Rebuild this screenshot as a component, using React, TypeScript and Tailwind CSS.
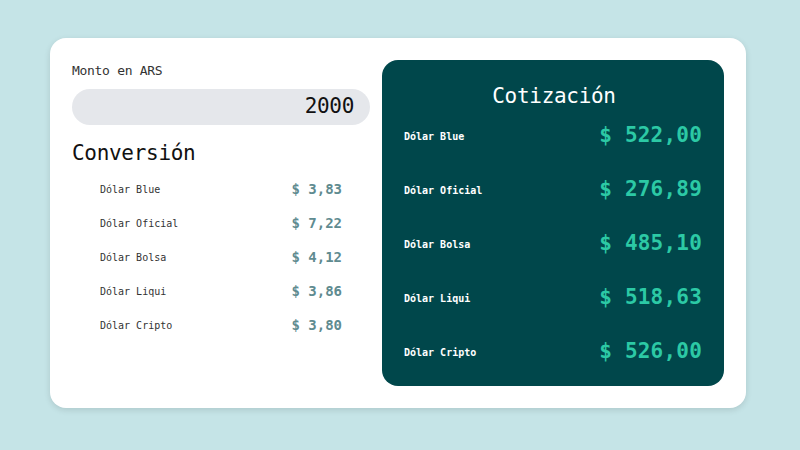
import React from 'react';

const mono = { fontFamily: '"DejaVu Sans Mono", "Liberation Mono", monospace' };

const conversion = [
  { name: 'Dólar Blue', value: '3,83' },
  { name: 'Dólar Oficial', value: '7,22' },
  { name: 'Dólar Bolsa', value: '4,12' },
  { name: 'Dólar Liqui', value: '3,86' },
  { name: 'Dólar Cripto', value: '3,80' },
];

const quotes = [
  { name: 'Dólar Blue', value: '522,00' },
  { name: 'Dólar Oficial', value: '276,89' },
  { name: 'Dólar Bolsa', value: '485,10' },
  { name: 'Dólar Liqui', value: '518,63' },
  { name: 'Dólar Cripto', value: '526,00' },
];

export default function App() {
  return (
    <div
      className="w-[800px] h-[450px] bg-[#c5e4e7] flex items-start justify-start pt-[38px] pl-[50px]"
      style={mono}
    >
      <div className="w-[696px] h-[370px] bg-white rounded-2xl shadow-[0_2px_6px_rgba(0,0,0,0.12)] p-[22px] grid grid-cols-[298px_342px] gap-3">
        <div className="flex flex-col">
          <label className="text-[13px] leading-5 text-[#333] tracking-[-0.3px] mt-px">Monto en ARS</label>
          <div className="mt-[8px] h-9 rounded-full bg-[#e5e7eb] flex items-center justify-end pr-[16px]">
            <span className="text-[21px] text-[#111] tracking-[-0.3px]">2000</span>
          </div>
          <h2 className="mt-[14px] text-[21px] leading-7 text-[#111] tracking-[-0.3px]">Conversión</h2>
          <ul className="mt-[5px] px-7 flex flex-col">
            {conversion.map((c) => (
              <li key={c.name} className="h-[34px] flex items-center justify-between">
                <span className="text-[10px] text-[#333]">{c.name}</span>
                <span className="text-[14px] font-bold text-[#5f8b90]">$ {c.value}</span>
              </li>
            ))}
          </ul>
        </div>
        <div className="bg-[#00474b] rounded-2xl px-[22px] pt-[22px] flex flex-col">
          <h2 className="text-center text-[21px] leading-7 text-white tracking-[-0.3px] pl-[2px]">Cotización</h2>
          <ul className="-mt-[1px] flex flex-col">
            {quotes.map((q) => (
              <li key={q.name} className="h-[54px] flex items-center justify-between">
                <span className="text-[10px] font-bold text-white">{q.name}</span>
                <span className="text-[21px] font-bold text-[#2cc9a5] tracking-[0.2px]">$ {q.value}</span>
              </li>
            ))}
          </ul>
        </div>
      </div>
    </div>
  );
}
